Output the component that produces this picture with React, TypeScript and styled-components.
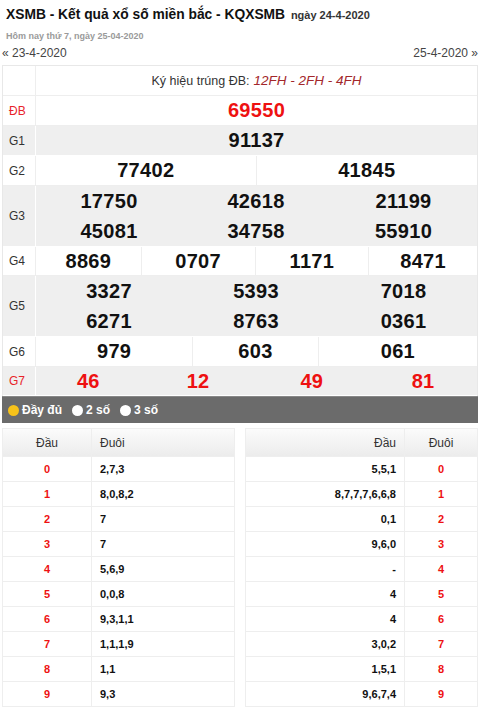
import React from "react";
import styled, { createGlobalStyle } from "styled-components";

const Global = createGlobalStyle`
  html, body { margin: 0; padding: 0; background: #fff; }
  body { font-family: "Liberation Sans", Arial, sans-serif; color: #333; }
  * { box-sizing: border-box; }
`;

const Page = styled.div`
  width: 480px;
  padding: 0 2px;
`;

const Title = styled.h1`
  margin: 0;
  padding: 7px 4px 0;
  height: 29px;
  font-size: 13.8px;
  font-weight: bold;
  color: #111;
  white-space: nowrap;
`;

const TitleDate = styled.span`
  font-size: 11px;
  color: #333;
  margin-left: 2px;
`;

const Today = styled.div`
  padding: 0 4px;
  height: 15px;
  font-size: 9px;
  font-weight: bold;
  color: #9a9a9a;
  line-height: 15px;
`;

const DateNav = styled.div`
  display: flex;
  justify-content: space-between;
  height: 21px;
  font-size: 12px;
  color: #444;
  line-height: 18px;
`;

const Results = styled.div`
  border: 1px solid #e8e8e8;
  border-bottom: none;
`;

const Row = styled.div<{ $alt?: boolean; $h?: number }>`
  display: grid;
  grid-template-columns: 33px 1fr;
  height: ${(p) => p.$h ?? 30}px;
  background: ${(p) => (p.$alt ? "#efefef" : "#fff")};
  border-bottom: 1px solid ${(p) => (p.$alt ? "#fff" : "#eee")};
`;

const Label = styled.div<{ $red?: boolean; $alt?: boolean }>`
  display: flex;
  align-items: center;
  padding-left: 6px;
  font-size: 12px;
  color: ${(p) => (p.$red ? "#e8232a" : "#333")};
  border-right: 1px solid ${(p) => (p.$alt ? "#fff" : "#eee")};
`;

const Info = styled.div`
  display: flex;
  align-items: center;
  justify-content: center;
  font-size: 12.5px;
  color: #333;
`;

const Code = styled.span`
  font-style: italic;
  color: #a3272b;
  margin-left: 4px;
  font-size: 13.5px;
`;

const Cells = styled.div<{ $cols: string }>`
  display: grid;
  grid-template-columns: ${(p) => p.$cols};
`;

const Cell = styled.div<{ $red?: boolean; $alt?: boolean; $last?: boolean }>`
  display: flex;
  align-items: center;
  justify-content: center;
  font-size: 20px;
  font-weight: bold;
  color: ${(p) => (p.$red ? "#ee1111" : "#111")};
  border-right: ${(p) =>
    p.$last ? "none" : `1px solid ${p.$alt ? "transparent" : "#eee"}`};
  letter-spacing: 0.3px;
`;

const Stack = styled.div`
  display: grid;
  grid-template-rows: 1fr 1fr;
`;

const FilterBar = styled.div`
  display: flex;
  align-items: center;
  height: 27px;
  background: #6b6b6b;
  border-top: 1px solid #888;
  padding-left: 6px;
  gap: 10px;
`;

const Option = styled.label`
  display: flex;
  align-items: center;
  gap: 3px;
  color: #fff;
  font-size: 12px;
  font-weight: bold;
`;

const Dot = styled.span<{ $on?: boolean }>`
  width: 11px;
  height: 11px;
  border-radius: 50%;
  background: ${(p) => (p.$on ? "#f7c21a" : "#fff")};
`;

const Lower = styled.div`
  display: grid;
  grid-template-columns: 233px 233px;
  justify-content: space-between;
  margin-top: 5px;
`;

const LtTable = styled.div`
  border: 1px solid #eee;
  border-bottom: none;
`;

const LtRow = styled.div<{ $cols: string; $head?: boolean }>`
  display: grid;
  grid-template-columns: ${(p) => p.$cols};
  height: ${(p) => (p.$head ? 28 : 25)}px;
  border-bottom: 1px solid #eee;
  background: ${(p) =>
    p.$head ? "linear-gradient(#fbfbfb, #ececec)" : "#fff"};
`;

const LtCell = styled.div<{
  $align: "left" | "center" | "right";
  $red?: boolean;
  $head?: boolean;
  $div?: boolean;
}>`
  display: flex;
  align-items: center;
  justify-content: ${(p) =>
    p.$align === "left" ? "flex-start" : p.$align === "right" ? "flex-end" : "center"};
  padding: 0 8px;
  font-size: ${(p) => (p.$head ? 12 : 11)}px;
  font-weight: ${(p) => (p.$head ? "normal" : "bold")};
  color: ${(p) => (p.$red ? "#ee1111" : p.$head ? "#333" : "#111")};
  border-right: ${(p) => (p.$div ? "1px solid #eee" : "none")};
`;

const dau = ["2,7,3", "8,0,8,2", "7", "7", "5,6,9", "0,0,8", "9,3,1,1", "1,1,1,9", "1,1", "9,3"];
const duoi = ["5,5,1", "8,7,7,7,6,6,8", "0,1", "9,6,0", "-", "4", "4", "3,0,2", "1,5,1", "9,6,7,4"];

export default function App() {
  const c4 = "106fr 114fr 114fr 108fr";
  return (
    <Page>
      <Global />
      <Title>
        XSMB - Kết quả xổ số miền bắc - KQXSMB <TitleDate>ngày 24-4-2020</TitleDate>
      </Title>
      <Today>Hôm nay thứ 7, ngày 25-04-2020</Today>
      <DateNav>
        <span>« 23-4-2020</span>
        <span>25-4-2020 »</span>
      </DateNav>
      <Results>
        <Row>
          <Label />
          <Info>
            Ký hiệu trúng ĐB:<Code>12FH - 2FH - 4FH</Code>
          </Info>
        </Row>
        <Row>
          <Label $red>ĐB</Label>
          <Cells $cols="1fr">
            <Cell $red $last>69550</Cell>
          </Cells>
        </Row>
        <Row $alt>
          <Label $alt>G1</Label>
          <Cells $cols="1fr">
            <Cell $alt $last>91137</Cell>
          </Cells>
        </Row>
        <Row>
          <Label>G2</Label>
          <Cells $cols="1fr 1fr">
            <Cell>77402</Cell>
            <Cell $last>41845</Cell>
          </Cells>
        </Row>
        <Row $alt $h={61}>
          <Label $alt>G3</Label>
          <Stack>
            <Cells $cols="1fr 1fr 1fr">
              <Cell $alt>17750</Cell>
              <Cell $alt>42618</Cell>
              <Cell $alt $last>21199</Cell>
            </Cells>
            <Cells $cols="1fr 1fr 1fr">
              <Cell $alt>45081</Cell>
              <Cell $alt>34758</Cell>
              <Cell $alt $last>55910</Cell>
            </Cells>
          </Stack>
        </Row>
        <Row $h={29}>
          <Label>G4</Label>
          <Cells $cols={c4}>
            <Cell>8869</Cell>
            <Cell>0707</Cell>
            <Cell>1171</Cell>
            <Cell $last>8471</Cell>
          </Cells>
        </Row>
        <Row $alt $h={61}>
          <Label $alt>G5</Label>
          <Stack>
            <Cells $cols="1fr 1fr 1fr">
              <Cell $alt>3327</Cell>
              <Cell $alt>5393</Cell>
              <Cell $alt $last>7018</Cell>
            </Cells>
            <Cells $cols="1fr 1fr 1fr">
              <Cell $alt>6271</Cell>
              <Cell $alt>8763</Cell>
              <Cell $alt $last>0361</Cell>
            </Cells>
          </Stack>
        </Row>
        <Row>
          <Label>G6</Label>
          <Cells $cols="158fr 126fr 159fr">
            <Cell>979</Cell>
            <Cell>603</Cell>
            <Cell $last>061</Cell>
          </Cells>
        </Row>
        <Row $alt $h={29}>
          <Label $alt $red>G7</Label>
          <Cells $cols={c4}>
            <Cell $alt $red>46</Cell>
            <Cell $alt $red>12</Cell>
            <Cell $alt $red>49</Cell>
            <Cell $alt $red $last>81</Cell>
          </Cells>
        </Row>
      </Results>
      <FilterBar>
        <Option>
          <Dot $on />Đầy đủ
        </Option>
        <Option>
          <Dot />2 số
        </Option>
        <Option>
          <Dot />3 số
        </Option>
      </FilterBar>
      <Lower>
        <LtTable>
          <LtRow $head $cols="89px 1fr">
            <LtCell $head $align="center" $div>Đầu</LtCell>
            <LtCell $head $align="left">Đuôi</LtCell>
          </LtRow>
          {dau.map((v, i) => (
            <LtRow key={i} $cols="89px 1fr">
              <LtCell $align="center" $red $div>{i}</LtCell>
              <LtCell $align="left">{v}</LtCell>
            </LtRow>
          ))}
        </LtTable>
        <LtTable>
          <LtRow $head $cols="1fr 72px">
            <LtCell $head $align="right" $div>Đầu</LtCell>
            <LtCell $head $align="center">Đuôi</LtCell>
          </LtRow>
          {duoi.map((v, i) => (
            <LtRow key={i} $cols="1fr 72px">
              <LtCell $align="right" $div>{v}</LtCell>
              <LtCell $align="center" $red>{i}</LtCell>
            </LtRow>
          ))}
        </LtTable>
      </Lower>
    </Page>
  );
}
